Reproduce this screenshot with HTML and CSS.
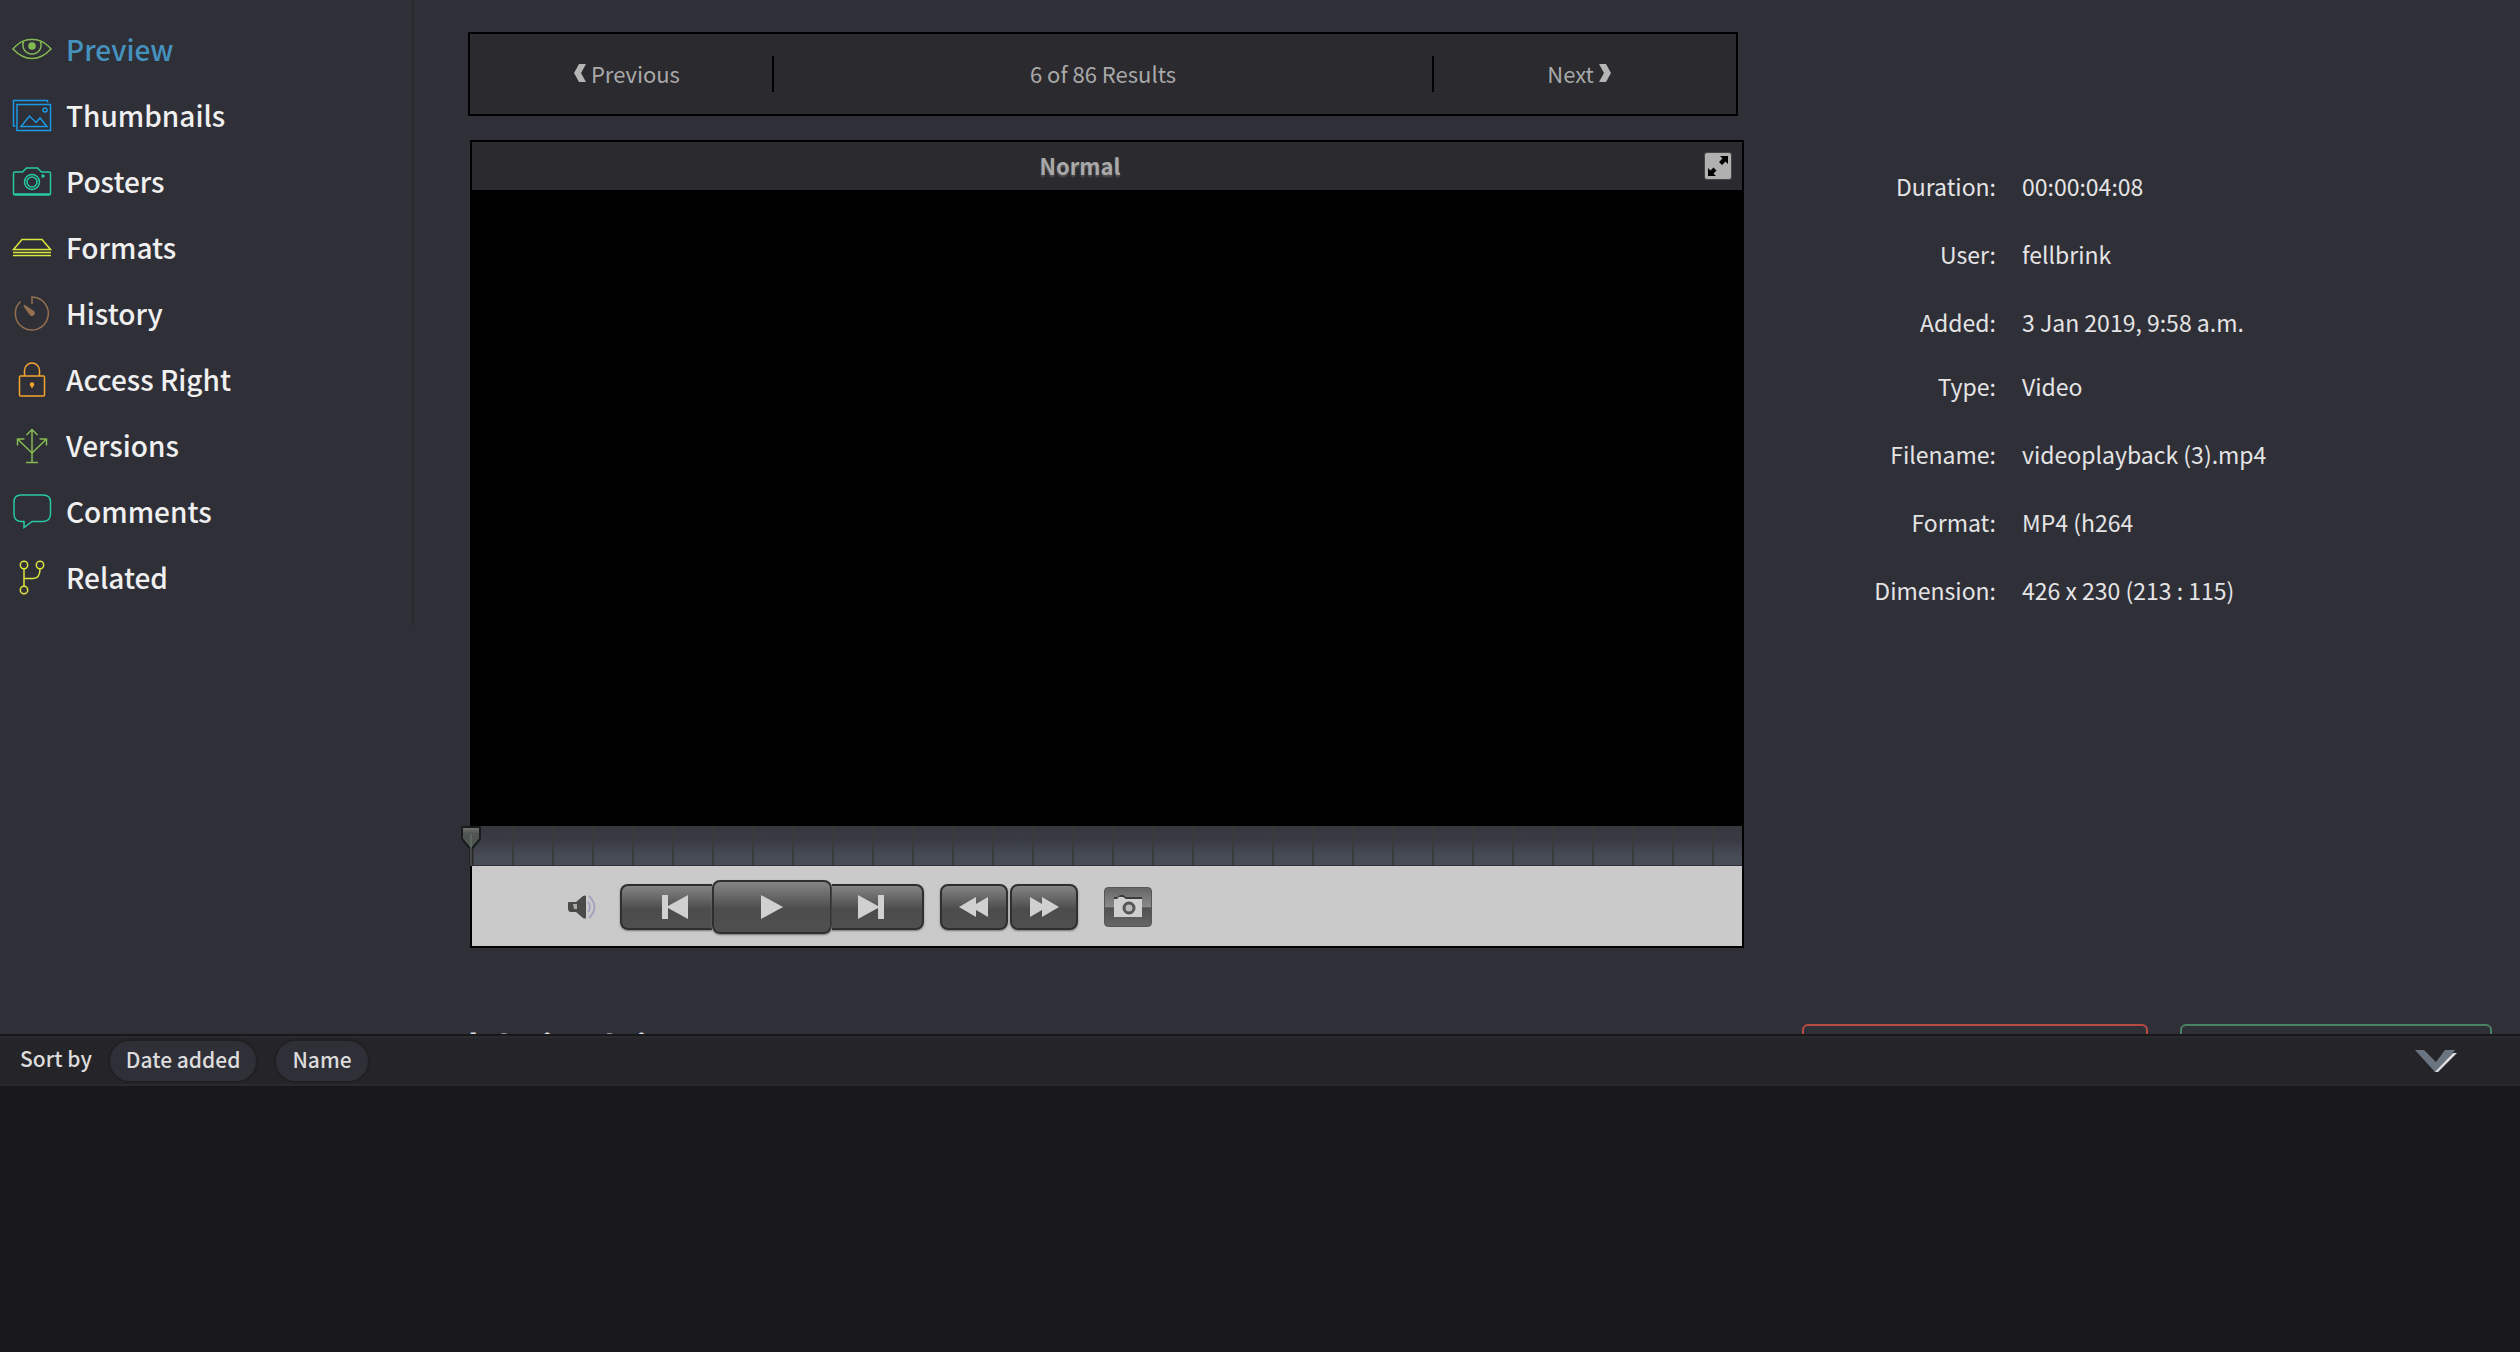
FILE: index.html
```html
<!DOCTYPE html>
<html lang="en">
<head>
    <meta charset="UTF-8">
    <meta name="viewport" content="width=device-width, initial-scale=1.0">
    <title>Asset Preview</title>
    <link rel="stylesheet" href="styles.css">
</head>
<body>
    <div class="workspace">
        <nav class="sidebar">
            <a class="nav-link active" href="#preview">
                <svg class="nav-icon green" viewBox="0 0 40 40">
                    <path d="M1 20C9 11 15 10.500 20 10.500S31 11 39 20C31 28.500 25 29.500 20 29.500S9 28.500 1 20Z"/>
                    <path d="M11.500 12.500C9.500 19 13 25 20 25S30.500 19 28.500 12.500"/>
                    <circle class="solid" cx="20" cy="17" r="3"/>
                </svg>
                Preview
            </a>
            <a class="nav-link" href="#thumbnails">
                <svg class="nav-icon blue" viewBox="0 0 40 40">
                    <path d="M35.500 7.500V5.500H1.500V31H3.500M5 9.500H38.500V35.500H5ZM9 31.500L17.500 21L24 27.500L28 23L35 31.500Z"/>
                    <circle cx="33" cy="15" r="2"/>
                </svg>
                Thumbnails
            </a>
            <a class="nav-link" href="#posters">
                <svg class="nav-icon teal" viewBox="0 0 40 40">
                    <path d="M3 11H10.500L14.500 7H25.500L29.500 11H37Q38.500 11 38.500 12.500V32Q38.500 34 37 34H3Q1.500 34 1.500 32V12.500Q1.500 11 3 11ZM2 33H38"/>
                    <circle cx="20" cy="21" r="7.500"/>
                    <circle cx="20" cy="21" r="5"/>
                    <circle class="solid" cx="31" cy="15" r="1"/>
                </svg>
                Posters
            </a>
            <a class="nav-link" href="#formats">
                <svg class="nav-icon yellow" viewBox="0 0 40 40">
                    <path d="M1.500 22.500L10 12.500H30L38.500 22.500ZM1 25.500H39M1 28.500H39"/>
                </svg>
                Formats
            </a>
            <a class="nav-link" href="#history">
                <svg class="nav-icon brown" viewBox="0 0 40 40">
                    <path d="M20 11V4A16.500 16.500 0 1 1 8.500 8.500"/>
                    <path class="solid" d="M12 12.500L21.500 18.500Q23 20.500 21 22Q19 23 18 21Z"/>
                </svg>
                History
            </a>
            <a class="nav-link" href="#access">
                <svg class="nav-icon orange" viewBox="0 0 40 40">
                    <rect x="7.500" y="17" width="25" height="20" rx="1"/>
                    <path d="M12.500 17V11.500A7.500 7.500 0 0 1 27.500 11.500V17M20 25V29"/>
                    <circle class="solid" cx="20" cy="25.500" r="1.500"/>
                </svg>
                Access Right
            </a>
            <a class="nav-link" href="#versions">
                <svg class="nav-icon green" viewBox="0 0 40 40">
                    <path d="M20 37.500V5M14.500 10L20 4.500L25.500 10M14 37.500H26M20 28L6 14.500M5.500 20.500V14H12.500M20 28L34 14.500M27.500 14H34.500V20.500"/>
                </svg>
                Versions
            </a>
            <a class="nav-link" href="#comments">
                <svg class="nav-icon teal" viewBox="0 0 40 40">
                    <path d="M9 4H31Q38.500 4 38.500 11V23Q38.500 30 31 30.500H20L12 36.500V30.500H9Q2 30 2 23V11Q2 4 9 4Z"/>
                </svg>
                Comments
            </a>
            <a class="nav-link" href="#related">
                <svg class="nav-icon yellow" viewBox="0 0 40 40">
                    <circle cx="12" cy="8" r="3.700"/>
                    <circle cx="28" cy="8" r="3.700"/>
                    <circle cx="12" cy="33" r="3.700"/>
                    <path d="M12 12V29M12 21.500H21Q28 21.500 28 12"/>
                </svg>
                Related
            </a>
        </nav>

        <main class="content">
            <div class="pager">
                <button class="pager-button previous" type="button">
                    <svg class="chevron" viewBox="0 0 12 18"><path d="M5 0H12L7 9L12 18H5L0 9Z"/></svg>
                    Previous
                </button>
                <span class="pager-status">6 of 86 Results</span>
                <button class="pager-button next" type="button">
                    Next
                    <svg class="chevron" viewBox="0 0 12 18"><path d="M7 0H0L5 9L0 18H7L12 9Z"/></svg>
                </button>
            </div>

            <section class="player">
                <header class="player-header">
                    <h2 class="player-title">Normal</h2>
                    <button class="fullscreen" type="button" aria-label="Full screen">
                        <svg viewBox="0 0 26 26">
                            <path d="M15 3H23V11L20.500 8.500L17 12L14 9L17.500 5.500ZM3 23V15L5.500 17.500L8.500 14.500L11.500 17.500L8.500 20.500L11 23Z"/>
                        </svg>
                    </button>
                </header>
                <div class="screen"></div>
                <div class="timeline">
                    <svg class="playhead" viewBox="0 0 22 40">
                        <defs>
                            <linearGradient id="head" x1="0" y1="0" x2="0" y2="1">
                                <stop offset="0" stop-color="#777977"/>
                                <stop offset="0.300" stop-color="#505452"/>
                                <stop offset="1" stop-color="#4e5852"/>
                            </linearGradient>
                        </defs>
                        <path d="M11 22V40" stroke="#181818" stroke-width="3"/>
                        <path d="M2 1H20V13L12 22.500H10L2 13Z" fill="url(#head)" stroke="#181b1a" stroke-width="2"/>
                        <path d="M11 8V40" stroke="#6d7973"/>
                    </svg>
                </div>
                <div class="controls">
                    <button class="volume" type="button" aria-label="Volume">
                        <svg viewBox="0 0 30 26">
                            <path fill="#4a4a49" d="M1 9Q1 8 2 8H9L16 2Q18 1 19 2V24Q18 25 16 24L9 18H3Q1 17 1 15Z"/>
                            <path fill="#aaa" d="M6 10H10V15H7Z"/>
                            <path fill="none" stroke="#a5a4bd" stroke-width="2" d="M21 8Q25 13 21 18M22 2Q33 13 22 24"/>
                        </svg>
                    </button>
                    <div class="transport">
                        <button class="key start" type="button" aria-label="Previous frame">
                            <svg viewBox="0 0 26 26"><path d="M0 1H6V12L26 1V25L6 14V25H0Z"/></svg>
                        </button>
                        <button class="key play" type="button" aria-label="Play">
                            <svg viewBox="0 0 26 26"><path d="M2 1L24 13L2 25Z"/></svg>
                        </button>
                        <button class="key end" type="button" aria-label="Next frame">
                            <svg viewBox="0 0 26 26"><path d="M26 1H20V12L0 1V25L20 14V25H26Z"/></svg>
                        </button>
                    </div>
                    <div class="seek">
                        <button class="key" type="button" aria-label="Rewind">
                            <svg class="wide" viewBox="0 0 30 22"><path d="M0 11L17 1V8L29 1V21L17 14V21Z"/></svg>
                        </button>
                        <button class="key" type="button" aria-label="Fast forward">
                            <svg class="wide" viewBox="0 0 30 22"><path d="M30 11L13 1V8L1 1V21L13 14V21Z"/></svg>
                        </button>
                    </div>
                    <button class="snapshot" type="button" aria-label="Take snapshot">
                        <svg viewBox="0 0 30 24">
                            <path fill="#3b3b3b" d="M1 2H5L7 0H10L13 2H29V4H1Z"/>
                            <path fill="#cfcfcf" d="M1 4H4L6 2H10L13 4H29V22H1Z"/>
                            <circle cx="16" cy="13" r="5" fill="#bbb" stroke="#555" stroke-width="3"/>
                        </svg>
                    </button>
                </div>
            </section>

            <h1 class="asset-title">laboi mdui</h1>
        </main>

        <aside class="info">
            <dl class="details">
                <dt>Duration:</dt><dd>00:00:04:08</dd>
                <dt>User:</dt><dd>fellbrink</dd>
                <dt>Added:</dt><dd>3 Jan 2019, 9:58 a.m.</dd>
                <dt class="compact">Type:</dt><dd class="compact">Video</dd>
                <dt>Filename:</dt><dd>videoplayback (3).mp4</dd>
                <dt>Format:</dt><dd>MP4 (h264</dd>
                <dt>Dimension:</dt><dd>426 x 230 (213 : 115)</dd>
            </dl>
            <div class="actions">
                <button class="action danger" type="button" aria-label="Delete"></button>
                <button class="action confirm" type="button" aria-label="Save"></button>
            </div>
        </aside>
    </div>

    <footer class="tray">
        <div class="sort-bar">
            <span class="sort-label">Sort by</span>
            <button class="sort-button" type="button">Date added</button>
            <button class="sort-button" type="button">Name</button>
            <button class="collapse" type="button" aria-label="Collapse">
                <svg viewBox="0 0 42 22">
                    <path fill="#6b7481" d="M0 0H9L21 12L30 0H40L22 22H20Z"/>
                    <path fill="#dcdde0" d="M38 3H42L23 22H20Z"/>
                </svg>
            </button>
        </div>
        <div class="tray-items"></div>
    </footer>
</body>
</html>
```
FILE: styles.css
```css
* {
    box-sizing: border-box;
}
body {
    display: flex;
    flex-direction: column;
    height: 100vh;
    margin: 0;
    overflow: hidden;
    background: #2f2f38;
    color: #dcdcdc;
    font-family: "Noto Sans CJK SC", "Noto Sans", sans-serif;
    font-size: 22px;
    line-height: 32px;
}
button {
    padding: 0;
    border: 0;
    background: none;
    color: inherit;
    font: inherit;
    cursor: pointer;
}
svg {
    display: block;
}

/* Upper area */
.workspace {
    display: flex;
    flex: 1;
    align-items: flex-start;
    min-height: 0;
    overflow: hidden;
}
.sidebar {
    flex: 0 0 414px;
    padding: 16px 12px;
    border-right: 2px solid #2a2a2d;
}
.nav-link {
    display: flex;
    align-items: center;
    gap: 14px;
    height: 66px;
    color: #f0f0f0;
    font-size: 28px;
    font-weight: 500;
    text-decoration: none;
}
.nav-link.active {
    color: #4592bf;
}
.nav-icon {
    width: 40px;
    height: 40px;
    fill: none;
    stroke: currentColor;
    stroke-width: 1.5;
}
.nav-icon .solid {
    fill: currentColor;
}
.green { color: #85b951; }
.blue { color: #1b9ae4; }
.teal { color: #27c9a2; }
.yellow { color: #dbe63e; }
.brown { color: #94704f; }
.orange { color: #f5a52f; }

.content {
    flex: 0 1 1276px;
    margin-left: 54px;
    padding-top: 32px;
}

/* Result pager */
.pager {
    display: flex;
    align-items: center;
    height: 84px;
    margin-right: 6px;
    border: 2px solid #000;
    background: #2b2a2e;
    color: #a9a9a9;
}
.pager-button {
    display: flex;
    align-items: center;
    justify-content: center;
    gap: 5px;
    width: 24%;
    height: 36px;
    padding-bottom: 2px;
}
.pager-button.previous {
    padding-left: 12px;
    border-right: 2px solid #000;
}
.pager-button.next {
    padding-right: 12px;
    border-left: 2px solid #000;
}
.pager-status {
    flex: 1;
    padding-bottom: 2px;
    text-align: center;
}
.chevron {
    width: 12px;
    height: 18px;
    fill: #b5b5b5;
}

/* Player */
.player {
    margin: 24px 0 0 2px;
    border: 2px solid #000;
}
.player-header {
    display: flex;
    align-items: center;
    height: 48px;
    padding-right: 10px;
    background: #2b2a2e;
}
.player-title {
    flex: 1;
    margin: 0;
    padding: 0 16px 2px 0;
    color: #a9a9a9;
    font-size: 22px;
    font-weight: 700;
    text-align: center;
    text-shadow: 0 2px 2px #555;
}
.fullscreen {
    width: 28px;
    height: 28px;
    border: 1px solid #444;
    border-radius: 3px;
    background: #b0b0b0;
}
.screen {
    height: 636px;
    background: #000;
}
.timeline {
    position: relative;
    height: 40px;
    border-bottom: 1px solid #30323a;
    background:
        repeating-linear-gradient(90deg, #3a3b3b 0 2px, transparent 2px 40px),
        linear-gradient(#36383e, #383b43 35%, #484c57 80%);
}
.playhead {
    position: absolute;
    top: 0;
    left: -12px;
    width: 22px;
    height: 40px;
}
.controls {
    display: flex;
    align-items: center;
    height: 80px;
    padding: 2px 0 0 95px;
    background: #cacaca;
}
.volume svg {
    width: 30px;
    height: 26px;
}
.transport {
    display: flex;
    align-items: center;
    margin-left: 23px;
}
.key {
    display: flex;
    align-items: center;
    justify-content: center;
    width: 68px;
    height: 46px;
    border: 2px solid #2f2f2f;
    border-radius: 8px;
    background: linear-gradient(#858585, #4c4c4c 55%, #4f4f4f);
    box-shadow: 0 1px 2px #777;
}
.key svg {
    width: 26px;
    height: 26px;
    fill: #d0d0d0;
}
.key svg.wide {
    width: 30px;
    height: 22px;
}
.key.start {
    width: 92px;
    padding-left: 16px;
    border-right: 0;
    border-radius: 8px 0 0 8px;
}
.key.play {
    width: 120px;
    height: 54px;
}
.key.end {
    width: 92px;
    padding-right: 12px;
    border-left: 0;
    border-radius: 0 8px 8px 0;
}
.seek {
    display: flex;
    gap: 2px;
    margin-left: 16px;
}
.snapshot {
    display: flex;
    align-items: center;
    justify-content: center;
    width: 48px;
    height: 40px;
    margin-left: 26px;
    border: 1px solid #555;
    border-radius: 4px;
    background: linear-gradient(#666, #8a8a8a 50%, #505050 52%, #666);
}
.snapshot svg {
    width: 30px;
    height: 24px;
}
.asset-title {
    margin: 73px 0 0;
    font-size: 34px;
    line-height: 50px;
    font-weight: 700;
}

/* Asset details */
.info {
    flex: 1;
    padding: 152px 28px 0 58px;
}
.details {
    display: grid;
    grid-template-columns: 194px 1fr;
    column-gap: 26px;
    margin: 0;
    color: #e4e4e4;
    font-size: 23px;
}
.details dt,
.details dd {
    height: 68px;
    margin: 0;
    padding-top: 18px;
}
.details dt {
    text-align: right;
}
.details .compact {
    height: 64px;
    padding-top: 14px;
}
.actions {
    display: flex;
    gap: 32px;
    margin-top: 400px;
}
.action {
    flex: 346 1 0;
    height: 64px;
    border: 2px solid #b94b45;
    border-radius: 6px;
}
.action.confirm {
    flex-grow: 312;
    border-color: #4b8260;
}

/* Bottom tray */
.tray {
    flex: 0 0 318px;
    border-top: 2px solid #18181a;
    background: #18181a;
}
.sort-bar {
    display: flex;
    align-items: center;
    height: 50px;
    padding: 0 63px 0 20px;
    border: solid #2a292e;
    border-width: 2px 0;
    background: #252428;
    font-size: 21px;
    font-weight: 500;
}
.sort-label {
    margin-right: 16px;
    padding-bottom: 6px;
}
.sort-button {
    height: 44px;
    margin-right: 16px;
    padding: 0 16px 4px;
    border: 2px solid #202022;
    border-radius: 22px;
    background: #2f2f38;
}
.collapse {
    margin-left: auto;
}
.collapse svg {
    width: 42px;
    height: 22px;
}
```
